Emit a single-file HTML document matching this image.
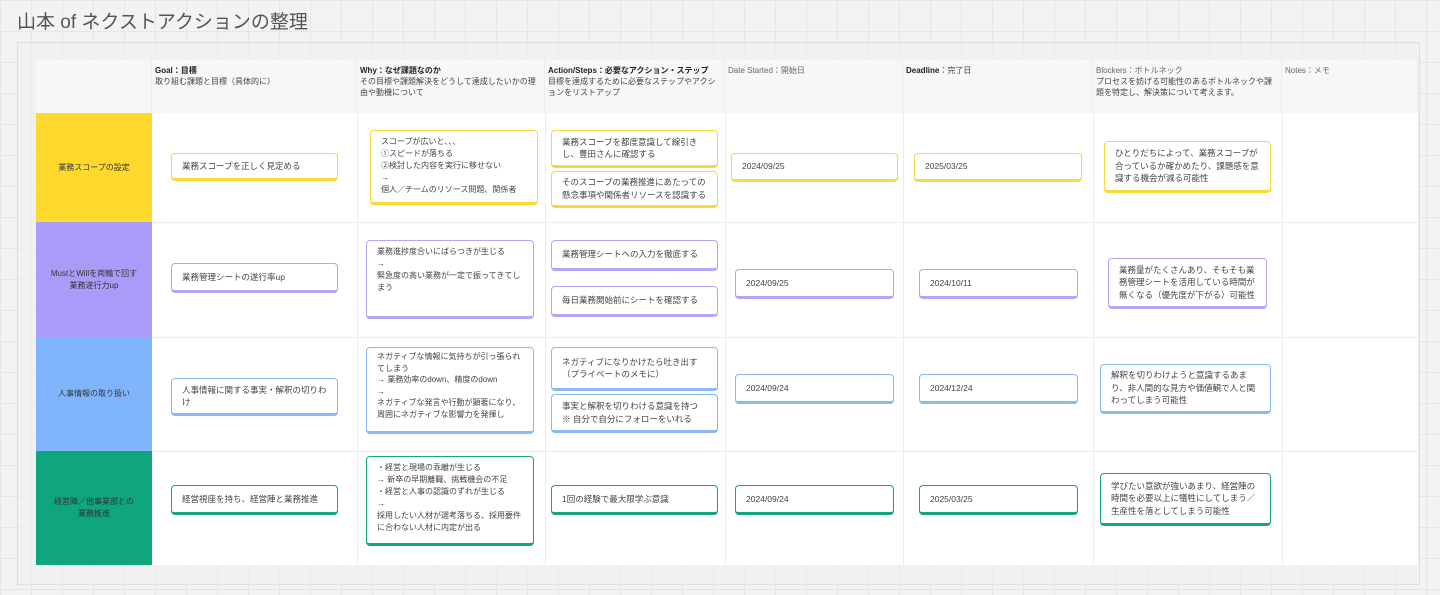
<!DOCTYPE html>
<html><head><meta charset="utf-8"><style>
*{box-sizing:border-box;margin:0;padding:0}
body{width:1440px;height:595px;overflow:hidden;position:relative;font-family:"Liberation Sans","Noto Sans CJK JP",sans-serif;color:#444;
background-color:#f3f3f3;background-image:linear-gradient(#e6e6e6 1px,transparent 1px),linear-gradient(90deg,#e6e6e6 1px,transparent 1px);background-size:31px 31px}
.t{position:absolute;left:17px;top:7px;font-size:19px;color:#555}
.frame{position:absolute;left:17px;top:42px;width:1403px;height:543px;border:1px solid #ddd;background:rgba(240,240,240,.6)}
.tbl{position:absolute;left:36px;top:60px;width:1382px;height:505px;background:#fff}
.hd{position:absolute;top:60px;height:53px;background:#f7f7f7;font-size:8px;line-height:11px;padding:5px 3px;color:#444;border-right:1px solid #ececec}
.hd b{color:#222}
.vl{position:absolute;top:113px;width:1px;height:452px;background:#ececec}
.hl{position:absolute;left:152px;width:1266px;height:1px;background:#ececec}
.lab{position:absolute;left:36px;width:116px;font-size:8px;line-height:12px;display:flex;align-items:center;justify-content:center;text-align:center;color:#333}
.c{position:absolute;background:#fff;border:1.5px solid;border-bottom-width:3px;border-radius:4px;font-size:8.5px;line-height:12.5px;padding:4px 10px;color:#444;display:flex;align-items:center}
.c.tp{align-items:flex-start;font-size:8px;line-height:12px;padding-top:3px}
.y{border-color:#f7d93e}.p{border-color:#b3a6f5}.b{border-color:#8ab8f5}.g{border-color:#14a67f}
</style></head><body>
<div class="t">山本 of ネクストアクションの整理</div>
<div class="frame"></div>
<div class="tbl"></div>
<div class="hd" style="left:36px;width:116px"></div>
<div class="hd" style="left:152px;width:205px"><b>Goal：目標</b><br>取り組む課題と目標（具体的に）</div>
<div class="hd" style="left:357px;width:188px"><b>Why：なぜ課題なのか</b><br>その目標や課題解決をどうして達成したいかの理由や動機について</div>
<div class="hd" style="left:545px;width:180px"><b>Action/Steps：必要なアクション・ステップ</b><br>目標を達成するために必要なステップやアクションをリストアップ</div>
<div class="hd" style="left:725px;width:178px;color:#666">Date Started：開始日</div>
<div class="hd" style="left:903px;width:190px"><b>Deadline</b>：完了日</div>
<div class="hd" style="left:1093px;width:189px"><span style="color:#666">Blockers：ボトルネック</span><br>プロセスを妨げる可能性のあるボトルネックや課題を特定し、解決策について考えます。</div>
<div class="hd" style="left:1282px;width:136px;color:#666">Notes：メモ</div>
<div class="vl" style="left:357px"></div><div class="vl" style="left:545px"></div><div class="vl" style="left:725px"></div><div class="vl" style="left:903px"></div><div class="vl" style="left:1093px"></div><div class="vl" style="left:1282px"></div>
<div class="hl" style="top:222px"></div><div class="hl" style="top:337px"></div><div class="hl" style="top:451px"></div>
<div class="lab" style="top:113px;height:109px;background:#ffd92e">業務スコープの設定</div>
<div class="lab" style="top:222px;height:115px;background:#a89cf8">MustとWillを両輪で回す<br>業務遂行力up</div>
<div class="lab" style="top:337px;height:114px;background:#80b5fb">人事情報の取り扱い</div>
<div class="lab" style="top:451px;height:114px;background:#0fa67e">経営陣／他事業部との<br>業務推進</div>

<div class="c y" style="left:171px;top:153px;width:167px;height:28px">業務スコープを正しく見定める</div>
<div class="c y tp" style="left:370px;top:130px;width:168px;height:75px;padding-top:5px">スコープが広いと、、、<br>①スピードが落ちる<br>②検討した内容を実行に移せない<br>→<br>個人／チームのリソース問題、関係者</div>
<div class="c y" style="left:551px;top:130px;width:167px;height:38px">業務スコープを都度意識して線引きし、豊田さんに確認する</div>
<div class="c y" style="left:551px;top:171px;width:167px;height:37px">そのスコープの業務推進にあたっての懸念事項や関係者リソースを認識する</div>
<div class="c y" style="left:731px;top:153px;width:167px;height:29px">2024/09/25</div>
<div class="c y" style="left:914px;top:153px;width:168px;height:29px">2025/03/25</div>
<div class="c y" style="left:1104px;top:141px;width:167px;height:52px">ひとりだちによって、業務スコープが合っているか確かめたり、課題感を意識する機会が減る可能性</div>

<div class="c p" style="left:171px;top:263px;width:167px;height:30px">業務管理シートの遂行率up</div>
<div class="c p tp" style="left:366px;top:240px;width:168px;height:79px;padding-top:5px">業務進捗度合いにばらつきが生じる<br>→<br>緊急度の高い業務が一定で振ってきてしまう</div>
<div class="c p" style="left:551px;top:240px;width:167px;height:31px">業務管理シートへの入力を徹底する</div>
<div class="c p" style="left:551px;top:286px;width:167px;height:31px">毎日業務開始前にシートを確認する</div>
<div class="c p" style="left:735px;top:269px;width:159px;height:30px">2024/09/25</div>
<div class="c p" style="left:919px;top:269px;width:159px;height:30px">2024/10/11</div>
<div class="c p" style="left:1108px;top:258px;width:159px;height:51px">業務量がたくさんあり、そもそも業務管理シートを活用している時間が無くなる（優先度が下がる）可能性</div>

<div class="c b" style="left:171px;top:378px;width:167px;height:38px">人事情報に関する事実・解釈の切りわけ</div>
<div class="c b tp" style="left:366px;top:347px;width:168px;height:87px;overflow:hidden;line-height:11.5px">ネガティブな情報に気持ちが引っ張られてしまう<br>→ 業務効率のdown、精度のdown<br>→<br>ネガティブな発言や行動が顕著になり、周囲にネガティブな影響力を発揮し</div>
<div class="c b" style="left:551px;top:347px;width:167px;height:44px">ネガティブになりかけたら吐き出す（プライベートのメモに）</div>
<div class="c b" style="left:551px;top:394px;width:167px;height:39px">事実と解釈を切りわける意識を持つ<br>※ 自分で自分にフォローをいれる</div>
<div class="c b" style="left:735px;top:374px;width:159px;height:30px">2024/09/24</div>
<div class="c b" style="left:919px;top:374px;width:159px;height:30px">2024/12/24</div>
<div class="c b" style="left:1100px;top:364px;width:171px;height:50px">解釈を切りわけようと意識するあまり、非人間的な見方や価値観で人と関わってしまう可能性</div>

<div class="c g" style="left:171px;top:485px;width:167px;height:30px">経営視座を持ち、経営陣と業務推進</div>
<div class="c g tp" style="left:366px;top:456px;width:168px;height:90px;padding-top:5px">・経営と現場の乖離が生じる<br>→ 新卒の早期離職、挑戦機会の不足<br>・経営と人事の認識のずれが生じる<br>→<br>採用したい人材が選考落ちる、採用要件に合わない人材に内定が出る</div>
<div class="c g" style="left:551px;top:485px;width:167px;height:30px">1回の経験で最大限学ぶ意識</div>
<div class="c g" style="left:735px;top:485px;width:159px;height:30px">2024/09/24</div>
<div class="c g" style="left:919px;top:485px;width:159px;height:30px">2025/03/25</div>
<div class="c g" style="left:1100px;top:473px;width:171px;height:53px">学びたい意欲が強いあまり、経営陣の時間を必要以上に犠牲にしてしまう／生産性を落としてしまう可能性</div>
</body></html>
